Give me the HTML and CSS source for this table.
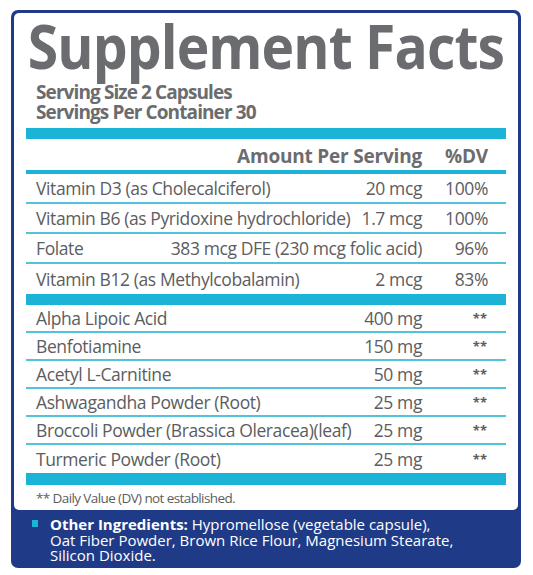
FILE: index.html
```html
<!DOCTYPE html>
<html>
<head>
<meta charset="utf-8">
<link rel="stylesheet" href="styles.css">
</head>
<body>
<div class="label">
  <div class="panel">
    <h1 class="title">Supplement Facts</h1>
    <div class="serving">
      <div>Serving Size 2 Capsules</div>
      <div>Servings Per Container 30</div>
    </div>
    <div class="bar bar-top"></div>
    <div class="head">
      <span class="amt">Amount Per Serving</span>
      <span class="dv">%DV</span>
    </div>
    <div class="rule"></div>
    <div class="group g1">
      <div class="row"><span class="name">Vitamin D3 (as Cholecalciferol)</span><span class="amt">20 mcg</span><span class="dv">100%</span></div>
      <div class="row"><span class="name">Vitamin B6 (as Pyridoxine hydrochloride)</span><span class="amt">1.7 mcg</span><span class="dv">100%</span></div>
      <div class="row"><span class="name">Folate</span><span class="amt">383 mcg DFE (230 mcg folic acid)</span><span class="dv">96%</span></div>
      <div class="row"><span class="name">Vitamin B12 (as Methylcobalamin)</span><span class="amt">2 mcg</span><span class="dv">83%</span></div>
    </div>
    <div class="bar bar-mid"></div>
    <div class="group g2">
      <div class="row"><span class="name">Alpha Lipoic Acid</span><span class="amt">400 mg</span><span class="dv star">**</span></div>
      <div class="row"><span class="name">Benfotiamine</span><span class="amt">150 mg</span><span class="dv star">**</span></div>
      <div class="row"><span class="name">Acetyl L-Carnitine</span><span class="amt">50 mg</span><span class="dv star">**</span></div>
      <div class="row"><span class="name">Ashwagandha Powder (Root)</span><span class="amt">25 mg</span><span class="dv star">**</span></div>
      <div class="row"><span class="name">Broccoli Powder (Brassica Oleracea)(leaf)</span><span class="amt">25 mg</span><span class="dv star">**</span></div>
      <div class="row"><span class="name">Turmeric Powder (Root)</span><span class="amt">25 mg</span><span class="dv star">**</span></div>
    </div>
    <div class="bar bar-bot"></div>
    <div class="note">** Daily Value (DV) not established.</div>
  </div>
  <div class="other">
    <span class="bullet"></span>
    <p class="other-text"><b>Other Ingredients:</b> Hypromellose (vegetable capsule),<br>Oat Fiber Powder, Brown Rice Flour, Magnesium Stearate,<br>Silicon Dioxide.</p>
  </div>
</div>
</body>
</html>
```

FILE: styles.css
```css
* { box-sizing: border-box; }
body {
  margin: 0;
  background: #ffffff;
  font-family: "Open Sans", "Liberation Sans", sans-serif;
}
.label {
  margin: 10px 0 0 11px;
  width: 510px;
  height: 558px;
  background: #1f3b87;
  border-radius: 7px;
  padding: 3px 3px 0 3px;
  display: flex;
  flex-direction: column;
}
.panel {
  background: #ffffff;
  border-radius: 5px;
  height: 497px;
  padding: 1px 12px 0 12px;
  color: #5c5d60;
}
.title {
  margin: 1px 0 0 0;
  font-size: 60px;
  line-height: 62px;
  font-weight: 700;
  color: #6b6c6f;
  letter-spacing: -1px;
  padding-left: 2px;
  white-space: nowrap;
  transform: scaleX(0.92);
  transform-origin: left center;
}
.serving {
  margin-top: 5px;
  padding-left: 10px;
  font-size: 19px;
  line-height: 20px;
  font-weight: 700;
  letter-spacing: -0.9px;
  color: #6b6c6f;
}
.bar {
  background: #1bb3d6;
}
.bar-top { height: 11px; margin-top: 6px; }
.bar-mid { height: 11px; }
.bar-bot { height: 12px; }
.head {
  height: 31px;
  display: flex;
  align-items: center;
  justify-content: flex-end;
  font-size: 19px;
  font-weight: 700;
  letter-spacing: -0.2px;
  color: #6b6c6f;
  padding-top: 2px;
}
.head .amt { text-align: right; }
.head .dv { width: 84px; text-align: right; padding-right: 18px; }
.rule { height: 4px; background: #1bb3d6; }
.row {
  display: flex;
  align-items: center;
  padding-left: 10px;
  font-size: 17.5px;
  letter-spacing: -0.4px;
  color: #5c5d60;
  border-bottom: 2px solid #52c2dd;
  white-space: nowrap;
}
.row:last-child { border-bottom: none; }
.g1 .row { height: 30px; }
.g2 .row { height: 28px; }
.row .name { flex: 1; }
.row .amt { text-align: right; }
.row .dv { width: 84px; text-align: right; padding-right: 18px; }
.row .star { font-size: 13px; font-weight: 700; padding-right: 19px; letter-spacing: 0; }
.note {
  height: 25px;
  display: flex;
  align-items: center;
  padding-left: 10px;
  font-size: 13.5px;
  letter-spacing: -0.6px;
  color: #5c5d60;
}
.other {
  display: flex;
  align-items: flex-start;
  padding: 7px 0 0 18px;
  color: #ffffff;
}
.bullet {
  width: 6px;
  height: 7px;
  background: #1bb3d6;
  margin-top: 3px;
  flex: none;
}
.other-text {
  margin: 0 0 0 12px;
  font-size: 15px;
  line-height: 15.5px;
  letter-spacing: 0;
}
.other-text b { font-weight: 700; }
```
